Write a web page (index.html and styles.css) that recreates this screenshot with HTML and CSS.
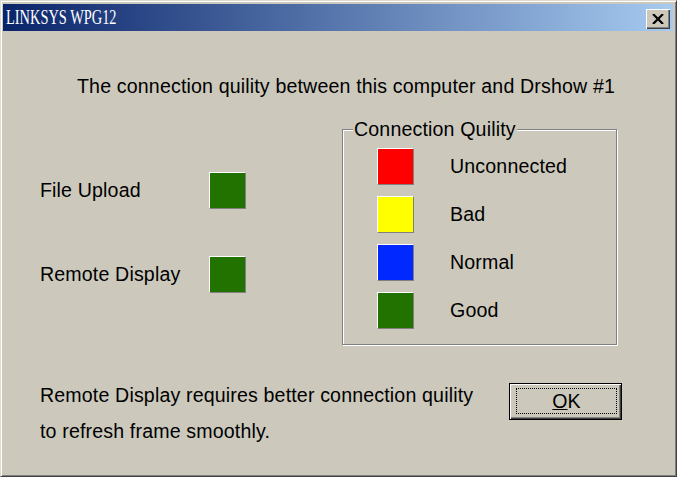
FILE: index.html
```html
<!DOCTYPE html>
<html lang="en">
<head>
  <meta charset="UTF-8" />
  <title>LINKSYS WPG12</title>
  <link rel="stylesheet" href="styles.css">
</head>
<body>
  <div class="window">
    <div class="titlebar">
      <span class="title">LINKSYS WPG12</span>
      <button class="close" aria-label="Close">
        <svg width="12" height="10" viewBox="0 0 12 10"><path d="M1 0 L11 10 M11 0 L1 10" stroke="#000" stroke-width="2.2" fill="none"/></svg>
      </button>
    </div>

    <div class="content">
      <p class="intro">The connection quility between this computer and Drshow #1</p>

      <div class="middle">
        <div class="status">
          <div class="status-row"><span class="label">File Upload</span><span class="swatch good"></span></div>
          <div class="status-row"><span class="label">Remote Display</span><span class="swatch good"></span></div>
        </div>

        <fieldset class="quality">
          <legend>Connection Quility</legend>
          <div class="keys">
            <div class="key"><span class="swatch unconnected"></span><span class="key-label">Unconnected</span></div>
            <div class="key"><span class="swatch bad"></span><span class="key-label">Bad</span></div>
            <div class="key"><span class="swatch normal"></span><span class="key-label">Normal</span></div>
            <div class="key"><span class="swatch good"></span><span class="key-label">Good</span></div>
          </div>
        </fieldset>
      </div>

      <div class="footer">
        <p class="note">Remote Display requires better connection quility<br>to refresh frame smoothly.</p>
        <button class="ok"><span class="focus"><u>O</u>K</span></button>
      </div>
    </div>
  </div>
</body>
</html>
```

FILE: styles.css
```css
:root {
  --face: #ccc9bc;
  --shadow: #808080;
  --dark: #404040;
}
* {
  box-sizing: border-box;
}
body {
  margin: 0;
  background: var(--face);
  font-family: "Liberation Sans", Arial, sans-serif;
  font-size: 19.6px;
  letter-spacing: 0.15px;
  color: #000;
}
.window {
  width: 677px;
  height: 477px;
  display: flex;
  flex-direction: column;
  background: var(--face);
  border: 1px solid;
  border-color: #dedbd0 var(--dark) var(--dark) #dedbd0;
  box-shadow: inset 1px 1px #fff, inset -1px -1px var(--shadow);
  padding: 3px 3px 3px 2px;
}
.titlebar {
  height: 27px;
  display: flex;
  align-items: flex-start;
  padding-left: 3px;
  background: linear-gradient(to right, #0a246a, #a6caf0);
}
.title {
  color: #fff;
  font-family: "Liberation Serif", serif;
  font-size: 20px;
  letter-spacing: 0;
  line-height: 27px;
  white-space: nowrap;
  transform: scaleX(0.72);
  transform-origin: left center;
}
.close {
  margin: 5px 3px 0 auto;
  width: 24px;
  height: 20px;
  padding: 0 1px 1px 0;
  border: 0;
  background: var(--face);
  box-shadow: inset 1px 1px #fff, inset -1px -1px var(--dark), inset -2px -2px var(--shadow);
  display: flex;
  align-items: center;
  justify-content: center;
}
.content {
  flex: 1;
  padding-left: 37px;
}
.intro {
  margin: 43px 0 0 37px;
  line-height: 24px;
  white-space: nowrap;
}
.middle {
  display: flex;
  margin-top: 21px;
}
.status {
  width: 302px;
  padding-top: 53px;
  display: flex;
  flex-direction: column;
  gap: 47px;
}
.status-row {
  display: flex;
  align-items: center;
  height: 37px;
}
.status-row .label {
  width: 169px;
}
.swatch {
  width: 37px;
  height: 37px;
  flex: none;
  border: 1px solid;
  border-color: #fff var(--shadow) var(--shadow) #fff;
}
.swatch.good { background: #227200; }
.swatch.unconnected { background: #ff0000; }
.swatch.bad { background: #ffff00; }
.swatch.normal { background: #0028ff; }

.quality {
  width: 275px;
  height: 226px;
  margin: 0;
  padding: 0 0 0 10px;
  border: 1px solid var(--shadow);
  box-shadow: inset 1px 1px #fff, 1px 1px #fff;
}
.quality legend {
  padding: 0 1px;
  line-height: 20px;
  background: var(--face);
}
.keys {
  padding: 9px 0 0 24px;
  display: flex;
  flex-direction: column;
  gap: 11px;
}
.key {
  display: flex;
  align-items: center;
}
.key-label {
  margin-left: 36px;
}
.footer {
  display: flex;
  align-items: flex-start;
  margin-top: 32px;
}
.note {
  width: 469px;
  margin: 0;
  line-height: 36px;
}
.ok {
  width: 113px;
  height: 37px;
  margin-top: 6px;
  padding: 4px 4px 5px 6px;
  font: inherit;
  color: #000;
  background: var(--face);
  border: 1px solid #000;
  box-shadow: inset 1px 1px #fff, inset -1px -1px var(--dark), inset -2px -2px var(--shadow);
}
.ok .focus {
  display: flex;
  align-items: center;
  justify-content: center;
  height: 100%;
  border: 1px dotted #000;
}
```
